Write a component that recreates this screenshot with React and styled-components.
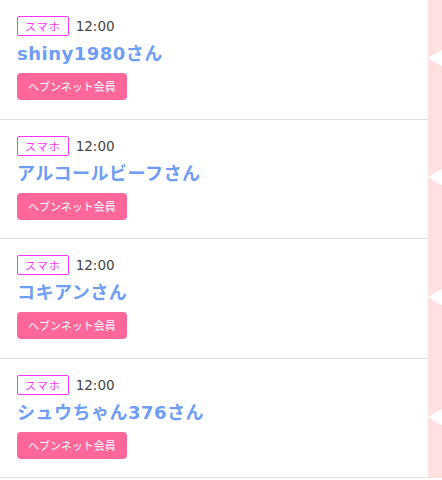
import React from 'react';
import styled, { createGlobalStyle } from 'styled-components';

const GlobalStyle = createGlobalStyle`
  html, body {
    margin: 0;
    padding: 0;
    background: #fff;
  }
  body {
    font-family: 'DejaVu Sans', 'Noto Sans CJK JP', sans-serif;
    overflow: hidden;
  }
`;

const List = styled.div`
  width: 442px;
  display: flex;
  flex-direction: column;
`;

const Row = styled.div`
  display: grid;
  grid-template-columns: 428px 14px;
`;

const Content = styled.div`
  box-sizing: border-box;
  height: 119.6px;
  padding: 16px 17px 0;
  border-bottom: 1.5px solid #dedede;
  display: flex;
  flex-direction: column;
  align-items: flex-start;
`;

const Meta = styled.div`
  display: flex;
  align-items: center;
  gap: 7px;
  height: 20px;
`;

const Device = styled.span`
  box-sizing: border-box;
  height: 20px;
  padding: 0 7px;
  border: 1px solid #ff33ff;
  border-radius: 2px;
  color: #ff33ff;
  font-family: 'Noto Sans CJK JP', sans-serif;
  font-size: 11px;
  line-height: 18px;
  letter-spacing: 1px;
`;

const Time = styled.span`
  color: #444;
  font-size: 13.5px;
  line-height: 20px;
`;

const Name = styled.div`
  margin-top: 5px;
  color: #6f9df4;
  font-size: 18px;
  font-weight: 600;
  letter-spacing: 0.5px;
  line-height: 26px;
`;

const Member = styled.span`
  margin-top: 6px;
  box-sizing: border-box;
  height: 27px;
  padding: 0 11px;
  border-radius: 4px;
  background: #ff6699;
  color: #fff;
  font-family: 'Noto Sans CJK JP', sans-serif;
  font-size: 11px;
  line-height: 27px;
`;

const Strip = styled.div`
  background: #ffe0e0;
  display: flex;
  align-items: center;
  padding-bottom: 4px;
`;

const Arrow = styled.div`
  width: 0;
  height: 0;
  border-top: 8px solid transparent;
  border-bottom: 8px solid transparent;
  border-right: 14px solid #fff;
`;

const users = [
  { name: 'shiny1980さん' },
  { name: 'アルコールビーフさん' },
  { name: 'コキアンさん' },
  { name: 'シュウちゃん376さん' },
];

const App = () => (
  <>
    <GlobalStyle />
    <List>
      {users.map((u, i) => (
        <Row key={i}>
          <Content>
            <Meta>
              <Device>スマホ</Device>
              <Time>12:00</Time>
            </Meta>
            <Name>{u.name}</Name>
            <Member>ヘブンネット会員</Member>
          </Content>
          <Strip>
            <Arrow />
          </Strip>
        </Row>
      ))}
    </List>
  </>
);

export default App;
